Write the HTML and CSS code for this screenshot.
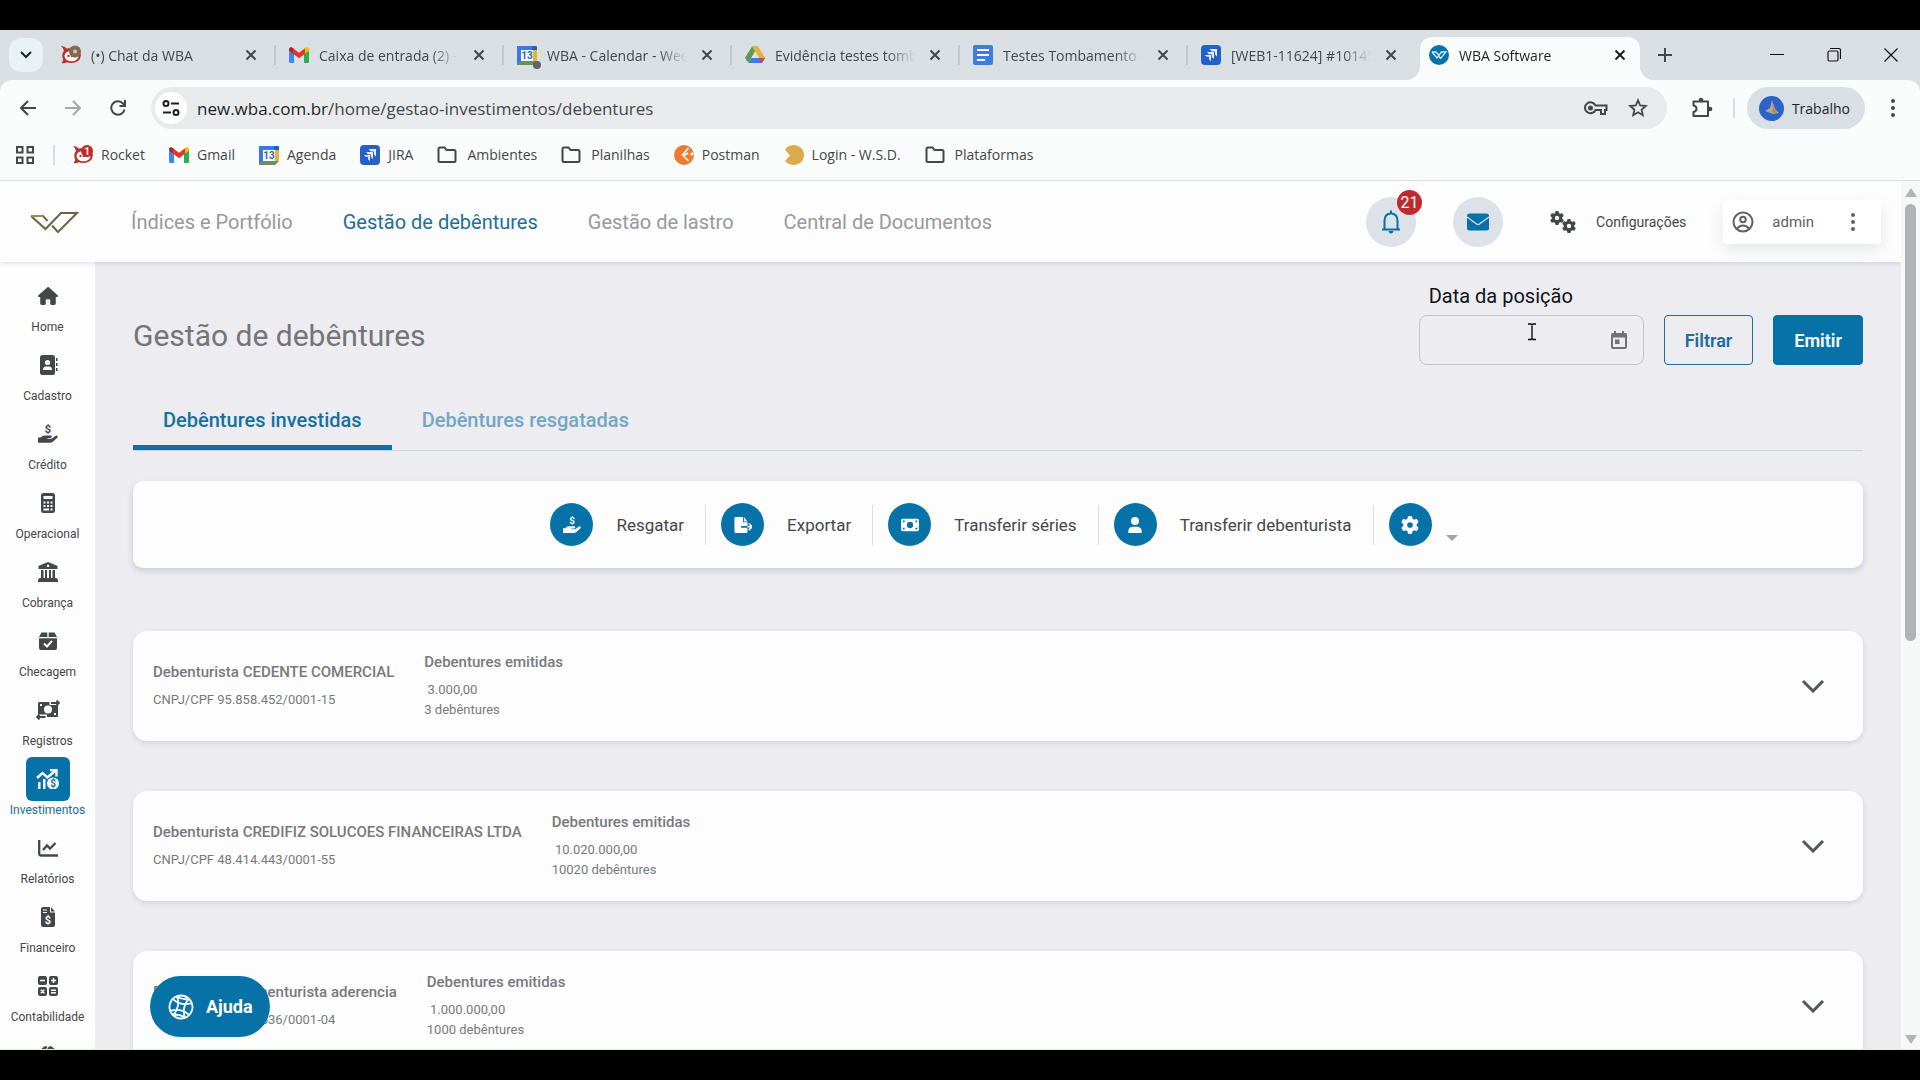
FILE: index.html
```html
<!DOCTYPE html>
<html lang="pt-BR">
<head>
  <meta charset="UTF-8">
  <meta name="viewport" content="width=device-width, initial-scale=1.0">
  <title>WBA Software</title>
  <link rel="stylesheet" href="styles.css">
</head>
<body>

  <!-- Shared icons -->
  <svg class="sprite" aria-hidden="true">
    <symbol id="i-close" viewBox="0 0 12 12"><path d="M1.5 1.5l9 9M10.5 1.5l-9 9" fill="none" stroke="currentColor" stroke-width="2"/></symbol>
    <symbol id="i-folder" viewBox="0 0 20 20"><path d="M1.5 15.500V4q0-1.500 1.500-1.500h4.500l2 2.500H17q1.500 0 1.500 1.500v9q0 1.500-1.500 1.500H3q-1.500 0-1.500-1.500z" fill="none" stroke="#444746" stroke-width="2"/></symbol>
    <symbol id="i-gmail" viewBox="0 0 20 16">
      <path d="M0 3v11.500Q0 16 1.500 16H5V7z" fill="#4285f4"/>
      <path d="M20 3v11.500q0 1.500-1.500 1.500H15V7z" fill="#34a853"/>
      <path d="M15 2.500V7.500l5-4V2.500Q20 0 17.500 0z" fill="#fbbc04"/>
      <path d="M0 3.500l5 4V2L2.500 0Q0 0 0 2.500z" fill="#b3251e"/>
      <path d="M4 1.300l6 4.500 6-4.500v5.500l-6 4.500-6-4.500z" fill="#d93a30"/>
    </symbol>
    <symbol id="i-calendar" viewBox="0 0 20 20">
      <path d="M0 1h16v4H4v15H1q-1 0-1-1z" fill="#3b78e7"/>
      <path d="M15 1h4q1 0 1 1v3h-5z" fill="#1b5fc1"/>
      <path d="M16 5h4v11h-4z" fill="#e8b13a"/>
      <path d="M4 16h16l-4 4H1q-1 0-1-1l4-3z" fill="#6b8f62"/>
      <path d="M4 5h12v11H4z" fill="#fff"/>
      <text x="10" y="14" text-anchor="middle" font-family="Roboto, sans-serif" font-size="10" font-weight="700" fill="#2d62b3">13</text>
    </symbol>
    <symbol id="i-jira" viewBox="0 0 20 20">
      <rect width="20" height="20" rx="4" fill="#2560c8"/>
      <path d="M8.500 4h7.500v7.500l-2-2V6.500h-3z M6 7h7v7l-2.200-2V9.200H8z M3.800 10H10v6.200l-2-2v-2.400H5.800z" fill="#e6edfa"/>
    </symbol>
    <symbol id="i-rocket" viewBox="0 0 20 20">
      <path d="M0 1q4 0 5.500 2.500Q18 1 20 10q-1 8-10 8-2.500 0-4-.8Q3 19 .5 18 2.500 16.500 2 14 0 9.500 3 6q-.5-3-3-5z" fill="#b8322f"/>
      <ellipse cx="10.500" cy="11" rx="7" ry="5.300" fill="#fff"/>
      <circle cx="7.500" cy="11" r="1.200" fill="#b8322f"/><circle cx="11" cy="11" r="1.200" fill="#b8322f"/><circle cx="14" cy="11" r="1.200" fill="#b8322f"/>
    </symbol>
    <symbol id="i-dots" viewBox="0 0 6 20"><circle cx="3" cy="3" r="2"/><circle cx="3" cy="10" r="2"/><circle cx="3" cy="17" r="2"/></symbol>
    <symbol id="i-hand" viewBox="0 0 20 20">
      <text x="10" y="9" text-anchor="middle" font-family="Roboto, sans-serif" font-size="11" font-weight="700">$</text>
      <path d="M0 13.500h2.500q2-2 4-2h6q1.200 0 1.200 1.200T12.500 14H9.500v.8h4.200l4-3q1-.6 1.800.1.7 1-.3 1.900L14.500 18q-1 .8-2.500.8H0z"/>
    </symbol>
    <symbol id="i-gear" viewBox="0 0 512 512"><path d="M495.900 166.600c3.200 8.700 .5 18.400-6.400 24.600l-43.300 39.400c1.100 8.300 1.700 16.800 1.700 25.400s-.6 17.100-1.700 25.400l43.300 39.400c6.900 6.200 9.600 15.900 6.400 24.600c-4.400 11.900-9.700 23.300-15.800 34.300l-4.700 8.100c-6.600 11-14 21.400-22.100 31.200c-5.900 7.200-15.700 9.600-24.500 6.800l-55.700-17.700c-13.400 10.300-28.200 18.900-44 25.400l-12.500 57.100c-2 9.100-9 16.300-18.200 17.800c-13.800 2.300-28 3.500-42.500 3.500s-28.700-1.200-42.500-3.500c-9.200-1.500-16.200-8.700-18.200-17.800l-12.500-57.100c-15.800-6.500-30.600-15.100-44-25.400L83.100 425.900c-8.800 2.800-18.600 .3-24.500-6.800c-8.100-9.800-15.500-20.200-22.100-31.200l-4.700-8.100c-6.100-11-11.400-22.400-15.800-34.300c-3.200-8.700-.5-18.400 6.400-24.600l43.300-39.400C64.600 273.100 64 264.600 64 256s.6-17.100 1.700-25.400L22.400 191.200c-6.900-6.200-9.600-15.900-6.400-24.600c4.400-11.900 9.700-23.300 15.800-34.300l4.700-8.100c6.600-11 14-21.400 22.100-31.200c5.900-7.200 15.700-9.600 24.500-6.800l55.700 17.700c13.400-10.300 28.200-18.900 44-25.400l12.500-57.100c2-9.100 9-16.300 18.200-17.800C227.300 1.200 241.500 0 256 0s28.700 1.200 42.500 3.500c9.200 1.500 16.200 8.700 18.200 17.800l12.500 57.100c15.800 6.500 30.600 15.100 44 25.400l55.700-17.700c8.800-2.800 18.600-.3 24.500 6.800c8.100 9.800 15.500 20.200 22.100 31.200l4.700 8.100c6.100 11 11.400 22.400 15.800 34.300zM256 336a80 80 0 1 0 0-160 80 80 0 1 0 0 160z"/></symbol>
    <symbol id="i-down" viewBox="0 0 24 14"><path d="M2 2l10 10L22 2" fill="none" stroke="currentColor" stroke-width="3"/></symbol>
  </svg>

  <div class="browser">

    <div class="tabstrip">
      <button class="tab-search" aria-label="Pesquisar guias"><svg width="12" height="8" viewBox="0 0 12 8"><path d="M1 1l5 5 5-5" fill="none" stroke="#1f1f1f" stroke-width="2"/></svg></button>
      <div class="tab">
        <svg class="favicon" viewBox="0 0 20 20"><use href="#i-rocket"/><circle cx="14" cy="6.500" r="6" fill="#7d6c50"/><circle cx="14" cy="6.500" r="2" fill="#cfc9bd"/></svg>
        <span class="tab-title">(•) Chat da WBA</span>
        <button class="tab-close" aria-label="Fechar"><svg width="12" height="12"><use href="#i-close"/></svg></button>
      </div>
      <div class="tab">
        <svg class="favicon"><use href="#i-gmail"/></svg>
        <span class="tab-title">Caixa de entrada (2) - wba</span>
        <button class="tab-close" aria-label="Fechar"><svg width="12" height="12"><use href="#i-close"/></svg></button>
      </div>
      <div class="tab">
        <svg class="favicon" viewBox="0 0 20 20"><use href="#i-calendar"/><circle cx="20" cy="20" r="4" fill="#5f6368"/></svg>
        <span class="tab-title">WBA - Calendar - Week</span>
        <button class="tab-close" aria-label="Fechar"><svg width="12" height="12"><use href="#i-close"/></svg></button>
      </div>
      <div class="tab">
        <svg class="favicon" viewBox="0 0 20 20"><path d="M7 1.500h6L6.500 13l-3 5L0 13z" fill="#5a9a54"/><path d="M7 1.500h6L20 13h-6z" fill="#e6b13a"/><path d="M6.500 13H20l-3.500 5h-13z" fill="#3f7be0"/><path d="M14 13h6l-3 5z" fill="#cc4a35"/><path d="M10 6.500l3.800 6.500H6.300z" fill="#dfe2e6"/></svg>
        <span class="tab-title">Evidência testes tombamento</span>
        <button class="tab-close" aria-label="Fechar"><svg width="12" height="12"><use href="#i-close"/></svg></button>
      </div>
      <div class="tab">
        <svg class="favicon" viewBox="0 0 20 20"><rect width="20" height="20" rx="2" fill="#3f7ce0"/><path d="M4 5h12M4 10h12M4 15h8" stroke="#fff" stroke-width="2.200"/></svg>
        <span class="tab-title">Testes Tombamento - WBA</span>
        <button class="tab-close" aria-label="Fechar"><svg width="12" height="12"><use href="#i-close"/></svg></button>
      </div>
      <div class="tab tab-last">
        <svg class="favicon"><use href="#i-jira"/></svg>
        <span class="tab-title">[WEB1-11624] #10145</span>
        <button class="tab-close" aria-label="Fechar"><svg width="12" height="12"><use href="#i-close"/></svg></button>
      </div>
      <div class="tab active">
        <svg class="favicon" viewBox="0 0 20 20"><circle cx="10" cy="10" r="10" fill="#0672a8"/><path d="M3 7h4l3 3.500M3 7l5 6 4.500-6H17l-5.500 6.500-1.500-2" fill="none" stroke="#d7eaf3" stroke-width="1.300"/></svg>
        <span class="tab-title">WBA Software</span>
        <button class="tab-close" aria-label="Fechar"><svg width="12" height="12"><use href="#i-close"/></svg></button>
      </div>
      <button class="new-tab" aria-label="Nova guia"><svg width="14" height="14" viewBox="0 0 14 14"><path d="M7 0v14M0 7h14" stroke="#444746" stroke-width="2"/></svg></button>
      <div class="window-buttons">
        <button aria-label="Minimizar"><svg width="14" height="14" viewBox="0 0 14 14"><path d="M0 6.500h14" stroke="#111"/></svg></button>
        <button aria-label="Restaurar"><svg width="14" height="14" viewBox="0 0 14 14"><path d="M3 .5h8.500q2 0 2 2V11M2.500 3h7q1.500 0 1.500 1.500v7q0 1.500-1.500 1.500h-7Q1 13 1 11.500v-7Q1 3 2.500 3z" fill="none" stroke="#111" stroke-width="1.200"/></svg></button>
        <button aria-label="Fechar janela"><svg width="14" height="14" viewBox="0 0 14 14"><path d="M.5.5l13 13M13.500.5l-13 13" stroke="#111" stroke-width="1.200"/></svg></button>
      </div>
    </div>

    <div class="toolbar">
      <button class="nav-button" aria-label="Voltar"><svg width="16" height="16" viewBox="0 0 16 16"><path d="M16 8H1.500M8 1L1 8l7 7" fill="none" stroke="#444746" stroke-width="2"/></svg></button>
      <button class="nav-button" aria-label="Avançar"><svg width="16" height="16" viewBox="0 0 16 16"><path d="M0 8h14.500M8 1l7 7-7 7" fill="none" stroke="#a5a8aa" stroke-width="2"/></svg></button>
      <button class="nav-button" aria-label="Recarregar"><svg width="16" height="16" viewBox="0 0 16 16"><path d="M14.500 9.500A6.700 6.700 0 1 1 13 3.500l1.500 2M15 0v6H9.500" fill="none" stroke="#444746" stroke-width="2"/></svg></button>
      <div class="address">
        <button class="site-info" aria-label="Informações do site"><svg width="18" height="16" viewBox="0 0 18 16"><g fill="none" stroke="#1f1f1f" stroke-width="2"><circle cx="4" cy="3.500" r="2.500"/><path d="M9 3.500h8M1 12.500h8"/><circle cx="14" cy="12.500" r="2.500"/></g></svg></button>
        <span class="url"><b>new.wba.com.br</b>/home/gestao-investimentos/debentures</span>
        <button aria-label="Senhas"><svg width="24" height="16" viewBox="0 0 24 16"><path d="M11.500 5.500H22.500V10H21v4h-4v-4h-5.500A5.500 5.500 0 1 1 11.500 5.500z" fill="none" stroke="#444746" stroke-width="2"/><circle cx="6.500" cy="8" r="2.500" fill="#444746"/></svg></button>
        <button aria-label="Favoritar"><svg width="20" height="20" viewBox="0 0 20 20"><path d="M10 2.300l2.200 5.200 5.600.5-4.200 3.700 1.200 5.500-4.800-2.900-4.800 2.900 1.200-5.500L2.200 8l5.600-.5z" fill="none" stroke="#444746" stroke-width="1.800"/></svg></button>
      </div>
      <button class="extensions" aria-label="Extensões"><svg width="22" height="22" viewBox="0 0 22 22"><path d="M2.500 4.500H17V19H2.500v-4q3-.5 3-3.200t-3-3.300z" fill="none" stroke="#444746" stroke-width="2" stroke-linejoin="round"/><circle cx="10" cy="3" r="2.300" fill="#444746"/><circle cx="19" cy="12" r="2.300" fill="#444746"/></svg></button>
      <span class="divider"></span>
      <button class="profile"><svg width="25" height="25" viewBox="0 0 25 25"><circle cx="12.500" cy="12.500" r="12.500" fill="#2c63c9"/><path d="M13 4l3 9 4 4-6 1-8-3 5-3z" fill="#a9a8a6"/><path d="M13 5l2 8 3 4-6-1 2-2z" fill="#e8762d"/></svg>Trabalho</button>
      <button class="menu" aria-label="Menu"><svg width="6" height="20"><use href="#i-dots"/></svg></button>
    </div>

    <nav class="bookmarks">
      <button class="apps" aria-label="Apps"><svg width="18" height="18" viewBox="0 0 18 18"><path d="M1 1h5.500v5.500H1zM11.500 1H17v5.500h-5.500zM1 11.500h5.500V17H1zM11.500 11.500H17V17h-5.500z" fill="none" stroke="#444746" stroke-width="2"/></svg></button>
      <div class="bookmark-list">
        <a href="#"><svg viewBox="0 0 20 20"><use href="#i-rocket"/><circle cx="14" cy="6" r="6" fill="#c0282a"/><text x="14" y="10" text-anchor="middle" font-family="Roboto, sans-serif" font-size="10" font-weight="700" fill="#fff">1</text></svg>Rocket</a>
        <a href="#"><svg><use href="#i-gmail"/></svg>Gmail</a>
        <a href="#"><svg><use href="#i-calendar"/></svg>Agenda</a>
        <a href="#"><svg><use href="#i-jira"/></svg>JIRA</a>
        <a href="#" class="folder"><svg><use href="#i-folder"/></svg>Ambientes</a>
        <a href="#" class="folder"><svg><use href="#i-folder"/></svg>Planilhas</a>
        <a href="#"><svg viewBox="0 0 20 20"><circle cx="10" cy="10" r="10" fill="#ee7b30"/><path d="M14.500 3l-6 7 6 6M9 11l5-3" fill="none" stroke="#fff" stroke-width="1.500"/><circle cx="18" cy="9" r="1.500" fill="#fff"/></svg>Postman</a>
        <a href="#"><svg viewBox="0 0 20 20"><path d="M3 2Q10-2 16 2q4 3 4 8t-4 8q-6 4-13 0l-2-2 5-5.500L1 5z" fill="#dcab4c"/></svg>Login - W.S.D.</a>
        <a href="#" class="folder"><svg><use href="#i-folder"/></svg>Plataformas</a>
      </div>
    </nav>

    <div class="viewport">
      <div class="app">

        <header class="app-header">
          <a href="#" class="logo" aria-label="WBA"><svg width="50" height="24" viewBox="0 0 50 24"><g fill="none" stroke-width="2"><path d="M1 6h12l4.500 5M1 6l14.500 13L31 3h16L28 22l-6-6.500" stroke="#6e6444"/><path d="M1 6h12" stroke="#a8864f"/></g></svg></a>
          <nav class="main-nav">
            <a href="#">Índices e Portfólio</a>
            <a href="#" class="current">Gestão de debêntures</a>
            <a href="#">Gestão de lastro</a>
            <a href="#">Central de Documentos</a>
          </nav>
          <button class="round-button" aria-label="Notificações">
            <svg width="20" height="24" viewBox="0 0 20 24"><path d="M1 19.500h18M3.500 19V11q0-7.500 6.500-7.500t6.500 7.500v8M10 0.500v3" fill="none" stroke="currentColor" stroke-width="2"/><path d="M7.500 21h5q-.5 2.500-2.500 2.500T7.500 21z" fill="currentColor"/></svg>
            <span class="badge">21</span>
          </button>
          <button class="round-button" aria-label="Mensagens">
            <svg width="22" height="18" viewBox="0 0 22 18"><rect y="0.500" width="22" height="17" rx="2.500" fill="currentColor"/><path d="M0 4l9.500 7q1.500 1 3 0L22 4" fill="none" stroke="#dde2e9" stroke-width="1.300"/></svg>
          </button>
          <a href="#" class="settings"><svg width="26" height="22" viewBox="0 0 26 22"><use href="#i-gear" width="14" height="14"/><use href="#i-gear" x="12" y="8" width="14" height="14"/></svg>Configurações</a>
          <button class="user">
            <svg width="22" height="22" viewBox="0 0 22 22"><g fill="none" stroke="currentColor" stroke-width="2"><circle cx="11" cy="11" r="9.500"/><circle cx="11" cy="8.500" r="2.800"/><path d="M5 17.500q2.500-3 6-3t6 3"/></g></svg>
            <span>admin</span>
            <svg width="6" height="20"><use href="#i-dots"/></svg>
          </button>
        </header>

        <nav class="sidebar">
          <a href="#"><span class="side-icon"><svg viewBox="0 0 576 512"><path d="M575.800 255.500c0 18-15 32.100-32 32.100h-32l.7 160.200c0 2.700-.2 5.400-.5 8.100V472c0 22.100-17.900 40-40 40H392c-22.100 0-40-17.900-40-40V384c0-17.700-14.300-32-32-32H256c-17.700 0-32 14.300-32 32v88c0 22.100-17.900 40-40 40H104c-22.100 0-40-17.900-40-40V287.600H32c-18 0-32-14-32-32.100c0-9 3-17 10-24L266.400 8c7-7 15-8 22-8s15 2 21 7L564.800 231.500c8 7 12 15 11 24z"/></svg></span>Home</a>
          <a href="#"><span class="side-icon"><svg viewBox="0 0 20 20"><rect x="2" y="0" width="15" height="20" rx="2.500"/><path d="M18 3h1.500v3H18zM18 8h1.500v3H18zM18 13h1.500v3H18z"/><circle cx="9.500" cy="7.500" r="2.600" fill="#fff"/><path d="M5 15q0-3.500 3-3.500h3q3 0 3 3.500z" fill="#fff"/></svg></span>Cadastro</a>
          <a href="#"><span class="side-icon"><svg><use href="#i-hand"/></svg></span>Crédito</a>
          <a href="#"><span class="side-icon"><svg viewBox="0 0 20 20"><rect x="3" y="0" width="14" height="20" rx="2.500"/><path d="M5.500 3h9v3h-9z" fill="#fff"/><path d="M5.500 9.500h9M5.500 13h9" stroke="#fff" stroke-width="1.800" stroke-dasharray="2 1.500"/><path d="M5.500 16.500h5.500M12.500 16.500h2" stroke="#fff" stroke-width="1.800"/></svg></span>Operacional</a>
          <a href="#"><span class="side-icon"><svg viewBox="0 0 20 20"><path fill-rule="evenodd" d="M10 0l9.500 4v3H.5V4zM10 2.500a1.300 1.300 0 1 0 .01 0z"/><path d="M3 8h2.500v8H3zM7 8h2v8H7zM11 8h2v8h-2zM14.500 8H17v8h-2.500zM1.500 16h17l1.500 2v2H0v-2z"/></svg></span>Cobrança</a>
          <a href="#"><span class="side-icon"><svg viewBox="0 0 20 20"><path d="M3.500 1.500h5.800V6H1zM10.700 1.500h5.800L19 6h-8.300zM1 7.200h18V17q0 2-2 2H3q-2 0-2-2z"/><path d="M6 12.500l3 3 5-5.500" fill="none" stroke="#fff" stroke-width="2"/></svg></span>Checagem</a>
          <a href="#"><span class="side-icon"><svg class="wide" viewBox="0 0 24 20"><path d="M3 2h10.500v3h7.500q1 0 1 1v10q0 1-1 1H11v-2.500H2V4q0-2 1-2z"/><circle cx="12" cy="9.500" r="4" fill="#fff"/><path d="M4 5h2M18 14h2" stroke="#fff" stroke-width="2"/><path d="M15 3h8M20.500.5L23 3l-2.500 2.500M9.500 17H1M3.500 14.500L1 17l2.500 2.500" fill="none" stroke="currentColor" stroke-width="1.800"/></svg></span>Registros</a>
          <a href="#" class="current"><span class="side-icon"><svg class="wide" viewBox="0 0 24 20"><path d="M1 9l5.500-5 5 4.500L19 2M14 1h6.500v6.500" fill="none" stroke="currentColor" stroke-width="2.400"/><path d="M2 13h2.500v7H2zM7 10h2.500v10H7z"/><circle cx="17" cy="14.500" r="6"/><text x="17" y="18" text-anchor="middle" font-family="Roboto, sans-serif" font-size="10" font-weight="700" fill="#0672a8">$</text></svg></span>Investimentos</a>
          <a href="#"><span class="side-icon"><svg viewBox="0 0 20 20"><path d="M1.200 2v13.500q0 2 2 2H20M5 12l4-4.500 3 3L17.500 5" fill="none" stroke="currentColor" stroke-width="2.300"/></svg></span>Relatórios</a>
          <a href="#"><span class="side-icon"><svg viewBox="0 0 20 20"><path d="M5 0h7v5.500h5V18q0 2-2 2H5q-2 0-2-2V2q0-2 2-2zM13 0l4 4.500h-4z"/><path d="M5 3h4M5 5.500h4" stroke="#fff" stroke-width="1.200"/><text x="10" y="17" text-anchor="middle" font-family="Roboto, sans-serif" font-size="11" font-weight="700" fill="#fff">$</text></svg></span>Financeiro</a>
          <a href="#"><span class="side-icon"><svg viewBox="0 0 20 20"><rect width="9" height="9" rx="2"/><rect x="11" width="9" height="9" rx="2"/><rect y="11" width="9" height="9" rx="2"/><rect x="11" y="11" width="9" height="9" rx="2"/><path d="M2 4.500h5M13 4.500h5M15.500 2v5M2.800 13.800l3.500 3.500M6.300 13.800l-3.500 3.500M13 14.200h5M13 16.800h5" stroke="#fff" stroke-width="1.500"/></svg></span>Contabilidade</a>
          <a href="#"><span class="side-icon"><svg class="wide" viewBox="0 0 24 20"><path d="M0 4h3v11H0zM4 5l5-4 3 1 3-1 5 4v10l-8 5-8-5zM21 4h3v11h-3z"/><path d="M12 2L8.500 7q3 2 5-2" fill="none" stroke="#fff"/></svg></span>Parceiros</a>
        </nav>

        <main class="content">
          <div class="page-head">
            <h1>Gestão de debêntures</h1>
            <div class="date-field">
              <label for="position-date">Data da posição</label>
              <div class="date-box">
                <input type="text" id="position-date">
                <button aria-label="Abrir calendário"><svg width="16" height="18" viewBox="0 0 16 18"><path fill-rule="evenodd" d="M2 2h1V0h2v2h6V0h2v2h1q2 0 2 2v12q0 2-2 2H2q-2 0-2-2V4q0-2 2-2zM2 6.500V16h12V6.500zM4 8.500h4.500V13H4z"/></svg></button>
                <svg class="text-cursor" width="8" height="18" viewBox="0 0 8 18"><path d="M0 1h3l1 1 1-1h3M4 1v15M0 16.500h3l1-1 1 1h3" fill="none" stroke="#000" stroke-width="1.300"/></svg>
              </div>
            </div>
            <button class="btn">Filtrar</button>
            <button class="btn btn-primary">Emitir</button>
          </div>

          <div class="tabs" role="tablist">
            <button role="tab" aria-selected="true" class="selected">Debêntures investidas</button>
            <button role="tab" aria-selected="false">Debêntures resgatadas</button>
          </div>

          <div class="actions">
            <button><span class="action-icon"><svg><use href="#i-hand"/></svg></span>Resgatar</button>
            <button><span class="action-icon"><svg viewBox="0 0 20 20"><path d="M2 1h8v6h5v4H8v2h7v4.500q0 1.500-1.500 1.500H2Q.5 19 .5 17.500v-15Q.5 1 2 1zM11 1l4 5h-4z"/><path d="M15 12h4M16.500 8.500L20 12l-3.500 3.500" fill="none" stroke="currentColor" stroke-width="1.800"/></svg></span>Exportar</button>
            <button><span class="action-icon"><svg viewBox="0 0 20 20"><rect x="0" y="3" width="20" height="14" rx="2"/><circle cx="10" cy="10" r="3.500" fill="#0672a8"/><path d="M2 6h2M16 6h2M2 14h2M16 14h2" stroke="#0672a8" stroke-width="1.800"/></svg></span>Transferir séries</button>
            <button><span class="action-icon"><svg viewBox="0 0 20 20"><circle cx="10" cy="5.500" r="4.500"/><path d="M2.500 19v-1.500q0-5.500 5.500-5.500h4q5.500 0 5.500 5.500V19z"/></svg></span>Transferir debenturista</button>
            <button aria-label="Opções"><span class="action-icon"><svg><use href="#i-gear"/></svg></span><svg class="caret" width="12" height="6" viewBox="0 0 12 6"><path d="M0 0h12L6 6z"/></svg></button>
          </div>

          <section class="card">
            <div class="holder">
              <h2>Debenturista CEDENTE COMERCIAL</h2>
              <p>CNPJ/CPF 95.858.452/0001-15</p>
            </div>
            <div class="issued">
              <h2>Debentures emitidas</h2>
              <p>&nbsp;3.000,00</p>
              <p>3 debêntures</p>
            </div>
            <button class="expand" aria-label="Expandir"><svg width="24" height="14"><use href="#i-down"/></svg></button>
          </section>

          <section class="card">
            <div class="holder">
              <h2>Debenturista CREDIFIZ SOLUCOES FINANCEIRAS LTDA</h2>
              <p>CNPJ/CPF 48.414.443/0001-55</p>
            </div>
            <div class="issued">
              <h2>Debentures emitidas</h2>
              <p>&nbsp;10.020.000,00</p>
              <p>10020 debêntures</p>
            </div>
            <button class="expand" aria-label="Expandir"><svg width="24" height="14"><use href="#i-down"/></svg></button>
          </section>

          <section class="card">
            <div class="holder">
              <h2>Debenturista debenturista aderencia</h2>
              <p>CNPJ/CPF 53.197.536/0001-04</p>
            </div>
            <div class="issued">
              <h2>Debentures emitidas</h2>
              <p>&nbsp;1.000.000,00</p>
              <p>1000 debêntures</p>
            </div>
            <button class="expand" aria-label="Expandir"><svg width="24" height="14"><use href="#i-down"/></svg></button>
          </section>
        </main>

      </div>

      <div class="scrollbar" aria-hidden="true">
        <span class="arrow-up"></span>
        <span class="thumb"></span>
        <span class="arrow-down"></span>
      </div>

      <button class="help"><svg width="26" height="26" viewBox="0 0 26 26"><g transform="rotate(12 13 13)" fill="none" stroke="currentColor" stroke-width="1.800"><circle cx="13" cy="13" r="11.500"/><path d="M7 3.500q5.500 9.500 0 19M19 3.500q-5.500 9.500 0 19M3.500 7q9.500 5.500 19 0M3.500 19q9.500-5.500 19 0M7 3.500q6 2.500 12 0M7 22.500q6-2.500 12 0"/></g></svg>Ajuda</button>
    </div>
  </div>

</body>
</html>
```

FILE: styles.css
```css
* {
  box-sizing: border-box;
}
body {
  margin: 0;
  padding: 30px 0;
  height: 100vh;
  background-color: #000;
  font-family: Roboto, "Liberation Sans", sans-serif;
  color: #444749;
  overflow: hidden;
}
button {
  border: 0;
  padding: 0;
  background: none;
  font: inherit;
  color: inherit;
  cursor: pointer;
  display: flex;
  align-items: center;
  justify-content: center;
  flex: none;
}
a {
  color: inherit;
  text-decoration: none;
}
h1, h2, p {
  margin: 0;
}
svg {
  fill: currentColor;
  flex: none;
}
.sprite {
  display: none;
}

/* Browser window */
.browser {
  height: 100%;
  display: flex;
  flex-direction: column;
  background-color: #dadfe4;
  border-bottom: 1px solid #dff0dc;
}
.tabstrip, .toolbar, .bookmarks {
  font-family: "Open Sans", "Noto Sans", sans-serif;
  font-size: 14px;
  display: flex;
  align-items: center;
  flex: none;
}
.tabstrip {
  height: 50px;
  padding: 0 9px;
}
.tab-search {
  width: 34px;
  height: 34px;
  border-radius: 12px;
  background-color: #e9f2f7;
  margin-right: 5px;
}
.tab {
  display: flex;
  align-items: center;
  flex: 0 1 228px;
  min-width: 0;
  height: 20px;
  padding: 0 17px 0 13px;
  border-right: 2px solid #c3c8cd;
}
.tab-last {
  border-color: transparent;
}
.favicon {
  width: 20px;
  height: 20px;
  margin-right: 10px;
  overflow: visible;
}
.tab-title {
  flex: 1;
  min-width: 0;
  overflow: hidden;
  white-space: nowrap;
  margin-right: 14px;
  -webkit-mask-image: linear-gradient(to right, #000 80%, transparent);
  mask-image: linear-gradient(to right, #000 80%, transparent);
}
.tab.active {
  position: relative;
  flex-basis: 220px;
  align-self: flex-end;
  height: 43px;
  padding: 0 14px 7px 9px;
  margin-left: 4px;
  border-right: 0;
  border-radius: 12px 12px 0 0;
  background-color: #fafbfb;
  color: #1f1f1f;
}
.tab.active::before, .tab.active::after {
  content: "";
  position: absolute;
  bottom: 0;
  left: -14px;
  width: 14px;
  height: 14px;
  background: radial-gradient(circle at 0 0, transparent 14px, #fafbfb 14px);
}
.tab.active::after {
  left: auto;
  right: -14px;
  background: radial-gradient(circle at 100% 0, transparent 14px, #fafbfb 14px);
}
.new-tab {
  margin-left: 18px;
}
.window-buttons {
  display: flex;
  gap: 43px;
  margin-left: auto;
  padding-right: 13px;
}
.toolbar {
  height: 56px;
  padding: 0 24px 0 10px;
  background-color: #fafbfb;
  border-radius: 12px 12px 0 0;
}
.nav-button {
  width: 36px;
  height: 36px;
  margin-right: 9px;
}
.address {
  flex: 1;
  display: flex;
  align-items: center;
  gap: 20px;
  height: 42px;
  margin-left: 6px;
  padding: 0 19px 0 4px;
  border-radius: 21px;
  background-color: #e8eaeb;
}
.site-info {
  width: 32px;
  height: 32px;
  border-radius: 50%;
  background-color: #fff;
}
.url {
  flex: 1;
  margin-left: -10px;
  font-size: 17px;
}
.url b {
  font-weight: 400;
  color: #1f1f1f;
}
.extensions {
  margin-left: 24px;
}
.divider {
  width: 2px;
  height: 20px;
  margin: 0 12px 0 20px;
  background-color: #d5dde5;
}
.profile {
  gap: 8px;
  height: 42px;
  padding: 0 15px 0 12px;
  border-radius: 21px;
  background-color: #d8dfe5;
  color: #1f1f1f;
}
.menu {
  margin-left: 25px;
  color: #444746;
}
.bookmarks {
  height: 45px;
  gap: 19px;
  padding: 0 16px 7px;
  background-color: #fafbfb;
  border-bottom: 1px solid #dcdedf;
}
.bookmark-list {
  display: flex;
  gap: 24px;
  padding-left: 18px;
  border-left: 2px solid #d5dde5;
}
.bookmarks a {
  display: flex;
  align-items: center;
  gap: 8px;
}
.bookmarks a svg {
  width: 20px;
  height: 20px;
}
.bookmarks .folder {
  gap: 10px;
}

/* Application */
.viewport {
  position: relative;
  flex: 1;
  min-height: 0;
  display: flex;
  background-color: #ececf1;
}
.app {
  flex: 1;
  min-width: 0;
  display: grid;
  grid-template-columns: 95px 1fr;
  grid-template-rows: 81px 1fr;
  overflow: hidden;
}
.app-header {
  grid-column: 1 / 3;
  display: flex;
  align-items: center;
  padding: 0 20px 0 30px;
  background-color: #fdfdfe;
  box-shadow: 0 2px 4px rgba(80, 90, 120, 0.15);
  z-index: 1;
}
.logo {
  display: flex;
  width: 101px;
}
.main-nav {
  display: flex;
  gap: 50px;
  margin-right: auto;
  font-size: 20px;
  color: #97999b;
}
.main-nav .current {
  color: #1f6d99;
}
.round-button {
  position: relative;
  width: 50px;
  height: 50px;
  margin-right: 37px;
  border-radius: 50%;
  background-color: #dde2e9;
  color: #0672a8;
}
.badge {
  position: absolute;
  top: -7px;
  right: -6px;
  width: 25px;
  height: 25px;
  border-radius: 50%;
  background-color: #bf2b2d;
  color: #fff;
  font-size: 16px;
  line-height: 25px;
}
.settings {
  display: flex;
  align-items: center;
  gap: 20px;
  margin: 0 37px 0 10px;
  font-size: 14px;
}
.user {
  gap: 18px;
  height: 44px;
  padding: 0 25px 0 9px;
  border-radius: 4px;
  background-color: #fff;
  box-shadow: 0 6px 16px rgba(60, 70, 60, 0.12);
  font-size: 15px;
  color: #5f6163;
}
.user span {
  margin-right: 18px;
}
.sidebar {
  padding-top: 12px;
  background-color: #fdfdfe;
  font-size: 12px;
  line-height: 18px;
}
.sidebar a {
  display: flex;
  flex-direction: column;
  align-items: center;
  margin-bottom: 7px;
}
.side-icon {
  display: flex;
  align-items: center;
  justify-content: center;
  width: 44px;
  height: 44px;
  border-radius: 6px;
}
.side-icon svg {
  width: 20px;
  height: 20px;
}
.side-icon .wide {
  width: 24px;
}
.sidebar .current {
  color: #1f6d99;
}
.sidebar .current .side-icon {
  background-color: #0672a8;
  color: #fff;
}
.content {
  min-width: 0;
  padding: 20px 38px 0;
}
.page-head {
  display: flex;
  align-items: flex-end;
  gap: 20px;
}
h1 {
  flex: 1;
  padding-bottom: 9px;
  font-size: 30px;
  font-weight: 400;
  line-height: 40px;
  color: #747577;
}
.date-field label {
  display: block;
  padding-left: 10px;
  margin-bottom: 5px;
  font-size: 20px;
  line-height: 28px;
  color: #111315;
}
.date-box {
  position: relative;
  display: flex;
  align-items: center;
  width: 225px;
  height: 50px;
  padding-right: 16px;
  border: 1px solid #bfc2c7;
  border-radius: 8px;
  color: #6f7173;
}
.date-box input {
  flex: 1;
  min-width: 0;
  height: 100%;
  padding: 0 12px;
  border: 0;
  background: none;
  font: inherit;
}
.text-cursor {
  position: absolute;
  left: 108px;
  top: 7px;
}
.btn {
  height: 50px;
  padding: 0 20px;
  border: 1px solid #1f6d99;
  border-radius: 4px;
  font-size: 18px;
  font-weight: 600;
  color: #1f6d99;
}
.btn-primary {
  background-color: #0672a8;
  border-color: #0672a8;
  color: #fff;
}
.tabs {
  display: flex;
  margin-top: 25px;
  border-bottom: 1px solid #cdd3da;
}
.tabs button {
  height: 60px;
  padding: 4px 30px 0;
  border-bottom: 5px solid transparent;
  font-size: 20px;
  font-weight: 500;
  color: #74a5c3;
}
.tabs .selected {
  border-color: #0672a8;
  color: #16709f;
}
.actions {
  display: flex;
  align-items: center;
  justify-content: center;
  height: 87px;
  margin-top: 30px;
  border-radius: 10px;
  background-color: #fdfdfe;
  box-shadow: 0 3px 6px rgba(60, 70, 100, 0.2);
}
.actions button {
  height: 40px;
  padding: 0 21px 0 15px;
  gap: 23px;
  border-right: 1px solid #dcdee1;
  font-size: 17px;
}
.actions button:last-child {
  gap: 14px;
  padding-right: 3px;
  border-right: 0;
}
.action-icon {
  display: flex;
  align-items: center;
  justify-content: center;
  width: 43px;
  height: 43px;
  border-radius: 50%;
  background-color: #0672a8;
  color: #fff;
}
.action-icon svg {
  width: 18px;
  height: 18px;
}
.caret {
  align-self: flex-end;
  margin-bottom: 4px;
  color: #a3a5a8;
}
.card {
  display: flex;
  align-items: center;
  gap: 30px;
  height: 110px;
  margin-bottom: 50px;
  padding: 0 38px 0 20px;
  border-radius: 14px;
  background-color: #fdfdfe;
  box-shadow: 0 2px 5px rgba(60, 70, 100, 0.15);
  font-size: 13px;
  line-height: 20px;
  color: #77797b;
}
.actions + .card {
  margin-top: 63px;
}
.card h2 {
  margin-bottom: 8px;
  font-size: 15px;
  font-weight: 500;
  line-height: 20px;
}
.expand {
  margin-left: auto;
  color: #55585a;
}

/* Scrollbar */
.scrollbar {
  width: 19px;
  display: flex;
  flex-direction: column;
  align-items: center;
  padding: 7px 0 5px;
  background-color: #f6f7f7;
}
.arrow-up, .arrow-down {
  border: 6px solid transparent;
  border-top: 0;
  border-bottom: 9px solid #b4b5b6;
}
.arrow-down {
  margin-top: auto;
  border-top: 9px solid #b4b5b6;
  border-bottom: 0;
}
.thumb {
  width: 11px;
  height: 51%;
  margin-top: 7px;
  border-radius: 6px;
  background-color: #b1b2b3;
}

/* Floating help button */
.help {
  position: absolute;
  left: 150px;
  bottom: 12px;
  gap: 12px;
  height: 61px;
  padding: 0 17px 0 18px;
  border-radius: 31px;
  background-color: #0672a8;
  color: #fff;
  font-size: 18px;
  font-weight: 700;
}
```
